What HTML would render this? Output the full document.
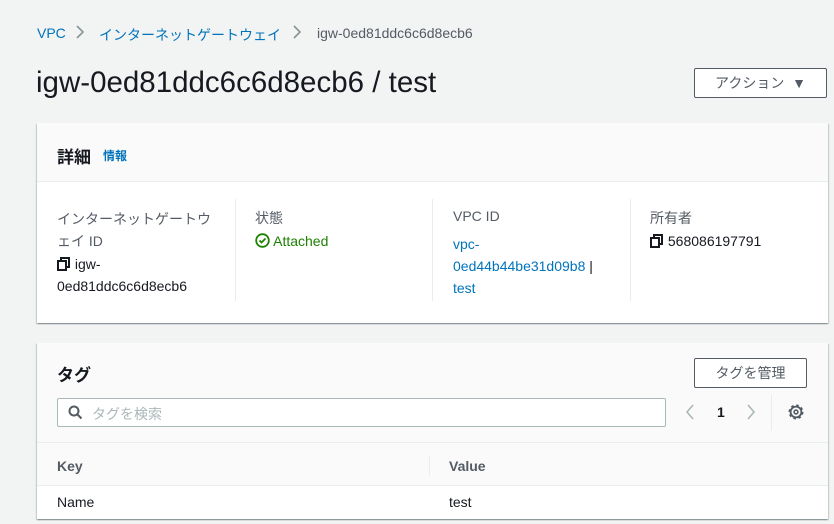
<!DOCTYPE html>
<html><head><meta charset="utf-8"><style>
*{margin:0;padding:0;box-sizing:border-box}
body{width:834px;height:524px;background:#f2f3f3;font-family:"Liberation Sans","Noto Sans CJK JP",sans-serif;color:#16191f;position:relative;overflow:hidden;font-size:14px}
.a{position:absolute;white-space:nowrap}
.link{color:#0073bb}
.panel{position:absolute;left:37px;width:791px;background:#fff;box-shadow:0 1px 1px rgba(0,28,36,.3),1px 1px 1px rgba(0,28,36,.15),-1px 1px 1px rgba(0,28,36,.15)}
.btn{position:absolute;border:1px solid #545b64;background:#fff;border-radius:2px;font-size:14px;color:#545b64;text-align:center}
.vl{position:absolute;width:1px;background:#eaeded}
</style></head><body>
<div class="a link" style="left:37px;top:25px;font-size:14px">VPC</div>
<svg class="a" style="left:75px;top:25px" width="10" height="14"><path d="M2 1l6 6-6 6" fill="none" stroke="#879596" stroke-width="1.6"/></svg>
<div class="a link" style="left:99px;top:25px">インターネットゲートウェイ</div>
<svg class="a" style="left:292px;top:25px" width="10" height="14"><path d="M2 1l6 6-6 6" fill="none" stroke="#879596" stroke-width="1.6"/></svg>
<div class="a" style="left:317px;top:25px;color:#545b64">igw-0ed81ddc6c6d8ecb6</div>
<div class="a" style="left:36px;top:66px;font-size:29.5px;color:#16191f">igw-0ed81ddc6c6d8ecb6 / test</div>
<div class="btn" style="left:694px;top:68px;width:133px;height:30px;line-height:28px">アクション &nbsp;▼</div>

<div class="panel" style="top:123px;height:200px">
 <div style="height:59px;background:#fafafa;border-bottom:1px solid #eaeded"></div>
 <div class="a" style="left:20px;top:20px;font-size:17px;font-weight:bold">詳細</div>
 <div class="a link" style="left:66px;top:24px;font-size:12px;font-weight:bold">情報</div>
 <div class="vl" style="left:198px;top:76px;height:102px"></div>
 <div class="vl" style="left:395px;top:76px;height:102px"></div>
 <div class="vl" style="left:593px;top:76px;height:102px"></div>
 <div class="a" style="left:20px;top:85px;color:#545b64;line-height:22px">インターネットゲートウ<br>ェイ ID</div>
 <div class="a" style="left:20px;top:130px;line-height:22px">
  <svg width="14" height="14" style="vertical-align:-2px"><rect x="1" y="4" width="8" height="9" fill="#fff" stroke="#16191f" stroke-width="2"/><path d="M4 4V1h8v9H9" fill="none" stroke="#16191f" stroke-width="2"/></svg> igw-<br>0ed81ddc6c6d8ecb6</div>
 <div class="a" style="left:218px;top:85px;color:#545b64">状態</div>
 <div class="a" style="left:218px;top:110px;color:#1d8102">
  <svg width="15" height="15" style="vertical-align:-2px"><circle cx="7.5" cy="7.5" r="6.3" fill="none" stroke="#1d8102" stroke-width="1.8"/><path d="M4.5 7.5l2 2 4-4" fill="none" stroke="#1d8102" stroke-width="1.8"/></svg> Attached</div>
 <div class="a" style="left:416px;top:85px;color:#545b64">VPC ID</div>
 <div class="a link" style="left:416px;top:110px;line-height:22px">vpc-<br>0ed44b44be31d09b8 <span style="color:#16191f">|</span><br>test</div>
 <div class="a" style="left:613px;top:85px;color:#545b64">所有者</div>
 <div class="a" style="left:613px;top:110px">
  <svg width="14" height="14" style="vertical-align:-2px"><rect x="1" y="4" width="8" height="9" fill="#fff" stroke="#16191f" stroke-width="2"/><path d="M4 4V1h8v9H9" fill="none" stroke="#16191f" stroke-width="2"/></svg> 568086197791</div>
</div>

<div class="panel" style="top:343px;height:176px">
 <div style="height:100px;background:#fafafa;border-bottom:1px solid #eaeded"></div>
 <div style="height:43px;background:#fafafa;border-bottom:1px solid #eaeded"></div>
 <div class="a" style="left:20px;top:18px;font-size:17px;font-weight:bold">タグ</div>
 <div class="btn" style="left:657px;top:15px;width:113px;height:30px;line-height:28px">タグを管理</div>
 <div class="a" style="left:20px;top:55px;width:609px;height:29px;border:1px solid #aab7b8;background:#fff;border-radius:2px"></div>
 <svg class="a" style="left:31px;top:62px" width="15" height="15"><circle cx="6" cy="6" r="4.5" fill="none" stroke="#545b64" stroke-width="2"/><path d="M9.5 9.5l4 4" stroke="#545b64" stroke-width="2"/></svg>
 <div class="a" style="left:55px;top:61px;color:#aab7b8">タグを検索</div>
 <svg class="a" style="left:648px;top:61px" width="10" height="16"><path d="M8 1L2 8l6 7" fill="none" stroke="#aab7b8" stroke-width="1.6"/></svg>
 <div class="a" style="left:680px;top:61px;font-weight:bold">1</div>
 <svg class="a" style="left:709px;top:61px" width="10" height="16"><path d="M2 1l6 7-6 7" fill="none" stroke="#aab7b8" stroke-width="1.6"/></svg>
 <div class="vl" style="left:734px;top:52px;height:36px"></div>
 <svg class="a" style="left:750px;top:60px" width="18" height="18"><circle cx="9" cy="9" r="6.2" fill="none" stroke="#545b64" stroke-width="2.6" stroke-dasharray="2.4 2.47"/><circle cx="9" cy="9" r="5.4" fill="none" stroke="#545b64" stroke-width="1.8"/><circle cx="9" cy="9" r="1.9" fill="none" stroke="#545b64" stroke-width="1.6"/></svg>
 <div class="vl" style="left:392px;top:112px;height:21px"></div>
 <div class="a" style="left:20px;top:115px;color:#545b64;font-weight:bold">Key</div>
 <div class="a" style="left:412px;top:115px;color:#545b64;font-weight:bold">Value</div>
 <div class="a" style="left:20px;top:151px">Name</div>
 <div class="a" style="left:412px;top:151px">test</div>
</div>
</body></html>
